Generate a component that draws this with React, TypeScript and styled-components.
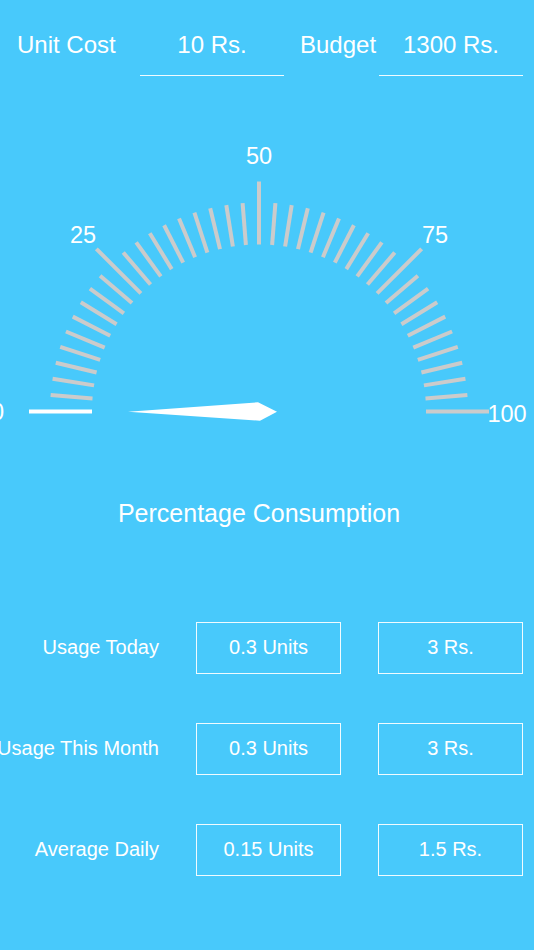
import styled, { createGlobalStyle } from 'styled-components';

const GlobalStyle = createGlobalStyle`
  html, body {
    margin: 0;
    padding: 0;
    background: #48c9fb;
  }
  body {
    font-family: "Liberation Sans", Arial, sans-serif;
    color: #ffffff;
  }
`;

const Page = styled.div`
  width: 534px;
  min-height: 950px;
  background: #48c9fb;
  overflow: hidden;
`;

const Header = styled.div`
  display: flex;
  align-items: flex-start;
  padding: 31px 11px 0 17px;
`;

const HeadLabel = styled.div<{ $width: number; $offset?: number }>`
  width: ${(p) => p.$width}px;
  margin-left: ${(p) => p.$offset ?? 0}px;
  font-size: 24px;
  line-height: 28px;
  white-space: nowrap;
`;

const HeadField = styled.div`
  width: 144px;
  font-size: 24px;
  line-height: 28px;
  padding-bottom: 16px;
  text-align: center;
  border-bottom: 1.5px solid rgba(255, 255, 255, 0.92);
`;

const GaugeSvg = styled.svg`
  display: block;
  margin-top: 43.5px;
`;

const Title = styled.div`
  width: 518px;
  margin-top: 58px;
  font-size: 25px;
  line-height: 30px;
  text-align: center;
`;

const Rows = styled.div`
  display: flex;
  flex-direction: column;
  gap: 49px;
  margin-top: 94px;
`;

const Row = styled.div`
  display: flex;
  align-items: center;
  height: 52px;
`;

const RowLabel = styled.div`
  width: 159px;
  flex-shrink: 0;
  display: flex;
  justify-content: flex-end;
  margin-right: 37px;
  font-size: 20px;
  white-space: nowrap;
`;

const ValueBox = styled.div`
  box-sizing: border-box;
  width: 145px;
  height: 52px;
  display: flex;
  align-items: center;
  justify-content: center;
  font-size: 20px;
  border: 1.5px solid rgba(255, 255, 255, 0.92);
  & + & {
    margin-left: 37px;
  }
`;

const CX = 259;
const CY = 411.5;

const ticks = Array.from({ length: 41 }, (_, i) => {
  const a = Math.PI - (i * Math.PI) / 40;
  const outer = i % 10 === 0 ? 230 : 209;
  const inner = 167;
  return {
    i,
    x1: CX + inner * Math.cos(a),
    y1: CY - inner * Math.sin(a),
    x2: CX + outer * Math.cos(a),
    y2: CY - outer * Math.sin(a),
  };
});

const labels = [
  { t: '0', x: -2.5, y: 411.5 },
  { t: '25', x: 83, y: 235 },
  { t: '50', x: 259, y: 155.5 },
  { t: '75', x: 435, y: 235 },
  { t: '100', x: 507, y: 413.5 },
];

const Gauge = () => (
  <GaugeSvg width={534} height={320} viewBox="0 120 534 320">
    {ticks.map((k) => (
      <line
        key={k.i}
        x1={k.x1}
        y1={k.y1}
        x2={k.x2}
        y2={k.y2}
        stroke={k.i === 0 ? '#ffffff' : '#cbcbcb'}
        strokeWidth={4}
      />
    ))}
    {labels.map((l) => (
      <text
        key={l.t}
        x={l.x}
        y={l.y}
        fill="#ffffff"
        fontSize={23.5}
        fontFamily='"Liberation Sans", Arial, sans-serif'
        textAnchor="middle"
        dominantBaseline="central"
      >
        {l.t}
      </text>
    ))}
    <polygon points="128,411.7 258,402.3 277,411.7 260,420.7" fill="#ffffff" />
  </GaugeSvg>
);

const usage = [
  { label: 'Usage Today', units: '0.3 Units', cost: '3 Rs.' },
  { label: 'Usage This Month', units: '0.3 Units', cost: '3 Rs.' },
  { label: 'Average Daily', units: '0.15 Units', cost: '1.5 Rs.' },
];

export default function App() {
  return (
    <Page>
      <GlobalStyle />
      <Header>
        <HeadLabel $width={123}>Unit Cost</HeadLabel>
        <HeadField>10 Rs.</HeadField>
        <HeadLabel $width={79} $offset={16}>Budget</HeadLabel>
        <HeadField>1300 Rs.</HeadField>
      </Header>
      <Gauge />
      <Title>Percentage Consumption</Title>
      <Rows>
        {usage.map((u) => (
          <Row key={u.label}>
            <RowLabel>{u.label}</RowLabel>
            <ValueBox>{u.units}</ValueBox>
            <ValueBox>{u.cost}</ValueBox>
          </Row>
        ))}
      </Rows>
    </Page>
  );
}
